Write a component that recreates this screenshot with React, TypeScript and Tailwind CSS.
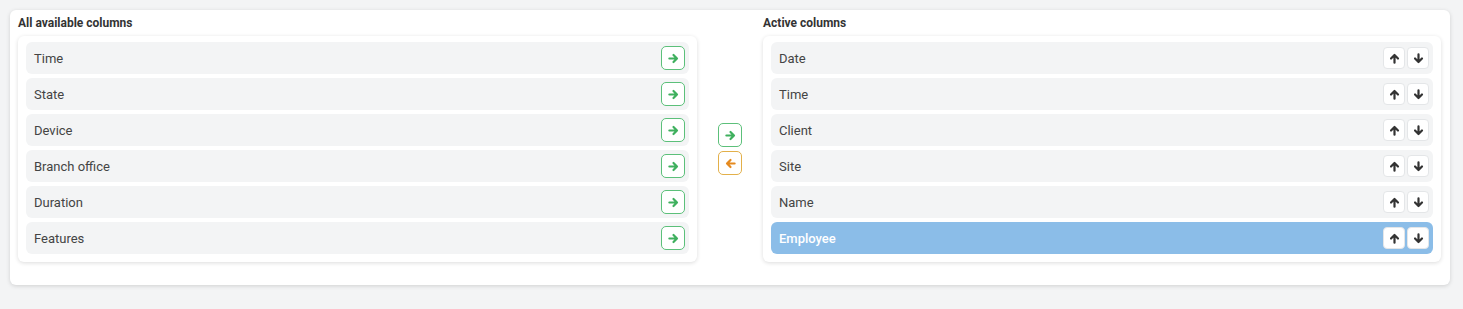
const available = ["Time", "State", "Device", "Branch office", "Duration", "Features"];
const active = ["Date", "Time", "Client", "Site", "Name", "Employee"];

type Dir = "right" | "left" | "up" | "down";

const rotation: Record<Dir, string> = {
    right: "",
    left: "rotate-180",
    up: "-rotate-90",
    down: "rotate-90",
};

function Arrow({ dir, className }: { dir: Dir; className: string }) {
    return (
        <svg viewBox="0 0 12 12" className={`h-[11px] w-[11px] ${rotation[dir]} ${className}`}>
            <path
                d="M1.5 6H9.5M6 2.2L9.8 6L6 9.8"
                fill="none"
                stroke="currentColor"
                strokeWidth="2.4"
                strokeLinecap="round"
                strokeLinejoin="round"
            />
        </svg>
    );
}

function AvailableRow({ label }: { label: string }) {
    return (
        <div className="flex h-8 items-center justify-between rounded-md bg-[#f3f4f5] pl-2 pr-1">
            <span className="pt-0.5 text-[13px] text-[#444]">{label}</span>
            <button className="flex h-6 w-6 items-center justify-center rounded-[5px] border border-[#5cc07a] bg-white">
                <Arrow dir="right" className="text-[#3fb05e]" />
            </button>
        </div>
    );
}

function ActiveRow({ label, selected }: { label: string; selected?: boolean }) {
    return (
        <div
            className={
                selected
                    ? "flex h-8 items-center justify-between rounded-md bg-[#8bbde8] pl-2 pr-1"
                    : "flex h-8 items-center justify-between rounded-md bg-[#f3f4f5] pl-2 pr-1"
            }
        >
            <span className={selected ? "pt-0.5 text-[13px] font-medium text-white" : "pt-0.5 text-[13px] text-[#444]"}>
                {label}
            </span>
            <div className="flex gap-0.5">
                <button className="flex h-[22px] w-[22px] items-center justify-center rounded-[4px] border border-[#e4e6e8] bg-white">
                    <Arrow dir="up" className="text-[#333]" />
                </button>
                <button className="flex h-[22px] w-[22px] items-center justify-center rounded-[4px] border border-[#e4e6e8] bg-white">
                    <Arrow dir="down" className="text-[#333]" />
                </button>
            </div>
        </div>
    );
}

export default function App() {
    return (
        <div className="min-h-[309px] bg-[#f3f4f5] pl-[10px] pr-[13px] pt-[10px] font-['Roboto',sans-serif]">
            <div className="rounded-md bg-white pb-[23px] pl-2 pr-[9px] pt-[5px] shadow-[0_1px_4px_rgba(0,0,0,0.15)]">
                <div className="flex">
                    <div className="w-[679px]">
                        <h3 className="h-[21px] text-[12px] font-bold leading-[16px] text-[#333]">
                            All available columns
                        </h3>
                        <div className="flex flex-col gap-1 rounded-md bg-white px-2 pb-2 pt-1.5 shadow-[0_1px_4px_rgba(0,0,0,0.14)]">
                            {available.map((c) => (
                                <AvailableRow key={c} label={c} />
                            ))}
                        </div>
                    </div>

                    <div className="flex w-[66px] flex-col items-center justify-center gap-1 pt-[21px]">
                        <button className="flex h-6 w-6 items-center justify-center rounded-[5px] border border-[#5cc07a] bg-white">
                            <Arrow dir="right" className="text-[#3fb05e]" />
                        </button>
                        <button className="flex h-6 w-6 items-center justify-center rounded-[5px] border border-[#e3b04a] bg-white">
                            <Arrow dir="left" className="text-[#e58a1f]" />
                        </button>
                    </div>

                    <div className="w-[678px]">
                        <h3 className="h-[21px] text-[12px] font-bold leading-[16px] text-[#333]">
                            Active columns
                        </h3>
                        <div className="flex flex-col gap-1 rounded-md bg-white px-2 pb-2 pt-1.5 shadow-[0_1px_4px_rgba(0,0,0,0.14)]">
                            {active.map((c) => (
                                <ActiveRow key={c} label={c} selected={c === "Employee"} />
                            ))}
                        </div>
                    </div>
                </div>
            </div>
        </div>
    );
}
